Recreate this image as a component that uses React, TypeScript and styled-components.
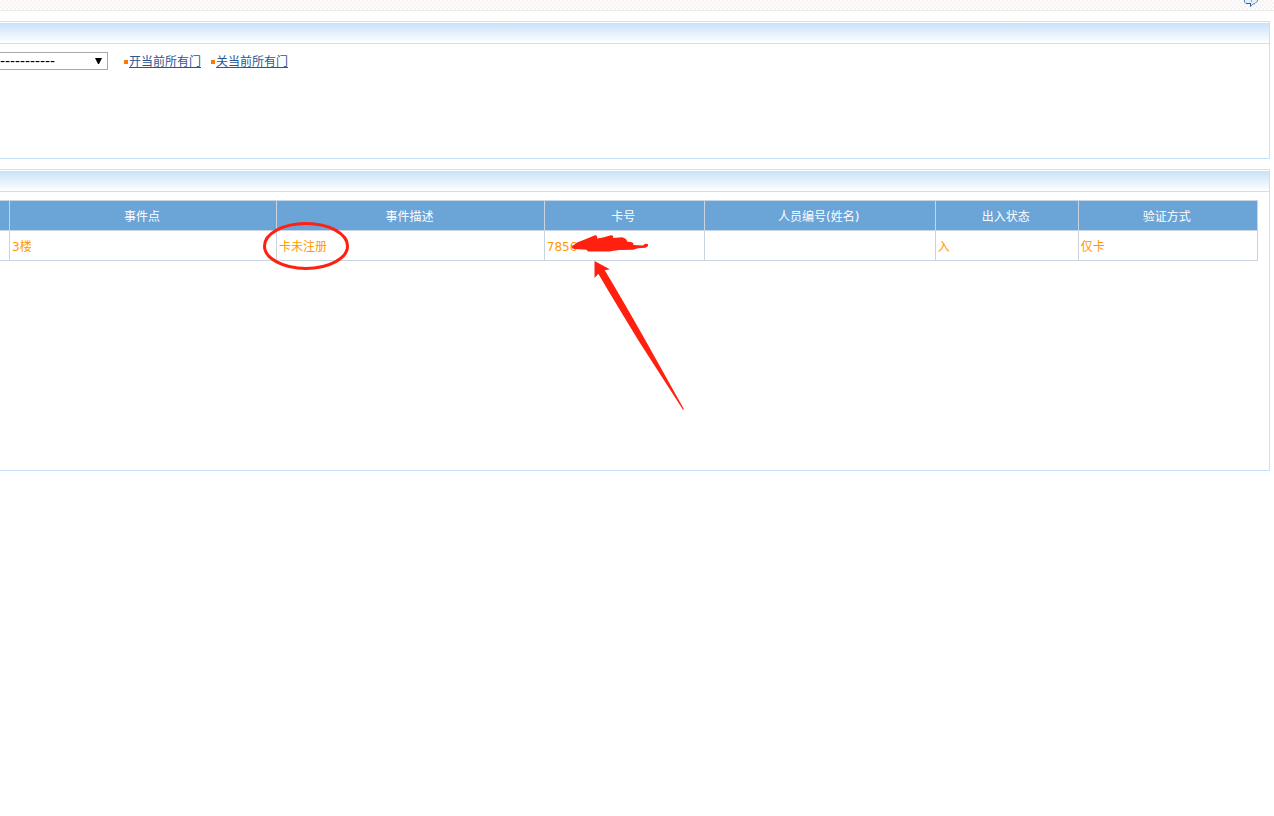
import React from 'react';
import styled, { createGlobalStyle } from 'styled-components';

const Global = createGlobalStyle`
  *, *::before, *::after { box-sizing: border-box; }
  html { background: #fff; }
  body {
    margin: 0;
    font-family: "DejaVu Sans", "Noto Sans CJK SC", sans-serif;
    font-size: 12px;
    line-height: 16px;
    color: #000;
  }
`;

const Page = styled.div`
  position: relative;
  min-height: 100vh;
  padding-right: 4px;
  overflow: hidden;
`;

const TopBar = styled.header`
  display: flex;
  justify-content: flex-end;
  height: 11px;
  margin: 0 -4px 10px 0;
  padding-right: 16px;
  overflow: hidden;
  border-bottom: 1px solid #ececec;
  background: repeating-conic-gradient(#f7f3f2 0 25%, #fffdfc 0 50%) 0 0 / 4px 4px;
`;

const HelpButton = styled.button`
  display: block;
  width: 14px;
  height: 7px;
  padding: 0;
  border: 0;
  background: none;
  svg { display: block; }
`;

const Panel = styled.section<{ $height: number }>`
  min-height: ${(p) => p.$height}px;
  margin-bottom: 10px;
  border: 1px solid #c8e1f8;
  border-left: 0;
`;

const PanelHeader = styled.div`
  height: 22px;
  border-top: 1px solid #fff;
  border-bottom: 1px solid #c8dff5;
  background: linear-gradient(#c9e1f9, #fff);
  background-clip: padding-box;
`;

const Controls = styled.div`
  display: flex;
  align-items: center;
  height: 18px;
  margin-top: 8px;
`;

const SelectWrap = styled.label`
  display: flex;
  position: relative;
  width: 108px;
  margin-right: 16px;
  svg {
    position: absolute;
    right: 6px;
    top: 6px;
    pointer-events: none;
  }
`;

const Select = styled.select`
  appearance: none;
  width: 100%;
  height: 18px;
  padding: 0;
  border: 1px solid #a9a9a9;
  border-left: 0;
  border-radius: 0;
  background: #fff;
  color: #000;
  font: 15px/16px "Liberation Sans", sans-serif;
`;

const Action = styled.a`
  display: flex;
  align-items: center;
  height: 18px;
  margin-right: 10px;
  padding-top: 2px;
  color: #2c5691;
  text-underline-offset: 1px;
  &::before {
    content: "";
    width: 4px;
    height: 4px;
    margin-right: 1px;
    background: #ff7800;
  }
`;

const TableWrap = styled.div`
  padding: 8px 11px 0 0;
`;

const Table = styled.table`
  width: 100%;
  table-layout: fixed;
  border-collapse: collapse;
  th, td {
    height: 30px;
    padding: 2px 2px 0;
    border: 1px solid #c9d4e2;
    white-space: nowrap;
    overflow: hidden;
  }
  th:first-child, td:first-child { border-left: 0; }
  th {
    padding-right: 4px;
    background: #6ba4d7;
    color: #fff;
    font-weight: 400;
  }
  td { color: #ff9900; }
`;

const Col = styled.col<{ $share: number }>`
  width: ${(p) => p.$share}%;
`;

const Markup = styled.svg`
  position: absolute;
  left: 0;
  top: 0;
  pointer-events: none;
`;

const columns = [
  { title: '', share: 0.76, value: '' },
  { title: '事件点', share: 21.23, value: '3楼' },
  { title: '事件描述', share: 21.3, value: '卡未注册' },
  { title: '卡号', share: 12.72, value: '7856' },
  { title: '人员编号(姓名)', share: 18.36, value: '' },
  { title: '出入状态', share: 11.37, value: '入' },
  { title: '验证方式', share: 14.26, value: '仅卡' },
];

export default function App() {
  return (
    <Page>
      <Global />
      <TopBar>
        <HelpButton aria-label="帮助">
          <svg width="14" height="7" viewBox="0 0 14 7">
            <path d="M0.5 0V2L2 3.5H6.5V6.5L9 4L11 3.5L13.5 1V0" fill="#e3effb" stroke="#5b8bc5" />
            <path d="M2 3.5H7M6.5 4V6.5" stroke="#2f5f9f" fill="none" />
            <path d="M7 1h1" stroke="#2f5f9f" />
          </svg>
        </HelpButton>
      </TopBar>

      <Panel $height={138}>
        <PanelHeader />
        <Controls>
          <SelectWrap>
            <Select aria-label="区域">
              <option>-----------</option>
            </Select>
            <svg width="7" height="6" viewBox="0 0 7 6">
              <path d="M0 0H7L4 6H3Z" fill="#000" />
            </svg>
          </SelectWrap>
          <Action href="#open">开当前所有门</Action>
          <Action href="#close">关当前所有门</Action>
        </Controls>
      </Panel>

      <Panel $height={302}>
        <PanelHeader />
        <TableWrap>
          <Table>
            <colgroup>
              {columns.map((c, i) => <Col key={i} $share={c.share} />)}
            </colgroup>
            <thead>
              <tr>{columns.map((c, i) => <th key={i} scope="col">{c.title}</th>)}</tr>
            </thead>
            <tbody>
              <tr>{columns.map((c, i) => <td key={i}>{c.value}</td>)}</tr>
            </tbody>
          </Table>
        </TableWrap>
      </Panel>

      <Markup width="700" height="420" viewBox="0 0 700 420" aria-hidden="true">
        <ellipse cx="306" cy="246" rx="41.5" ry="22.5" fill="none" stroke="#ff2010" strokeWidth="3" />
        <path
          d="M572 246.5L577 242.5L586 239L595 235.3Q598 235.5 597 238.5L603 237.5L611 235.3Q614 235.5 613 238L622 237.3Q627 238.5 627 241.5L632 242.3Q634 243.5 633.5 245L643 245.5L645 243.8Q649 243.500 648 246L645.500 247.800L638 248.300L633 249.800L619 250L609 251.500L588 251.500L586.500 249.800L575 249Q571.500 248.500 572 246.500Z"
          fill="#ff2010"
        />
        <path d="M594.500 261L609.800 269.300L604.800 270.300Q622 299 643 336L684 409.300L683 409.800L640 343Q616 304 598.300 273.800L594.500 278Z" fill="#ff2010" />
      </Markup>
    </Page>
  );
}
